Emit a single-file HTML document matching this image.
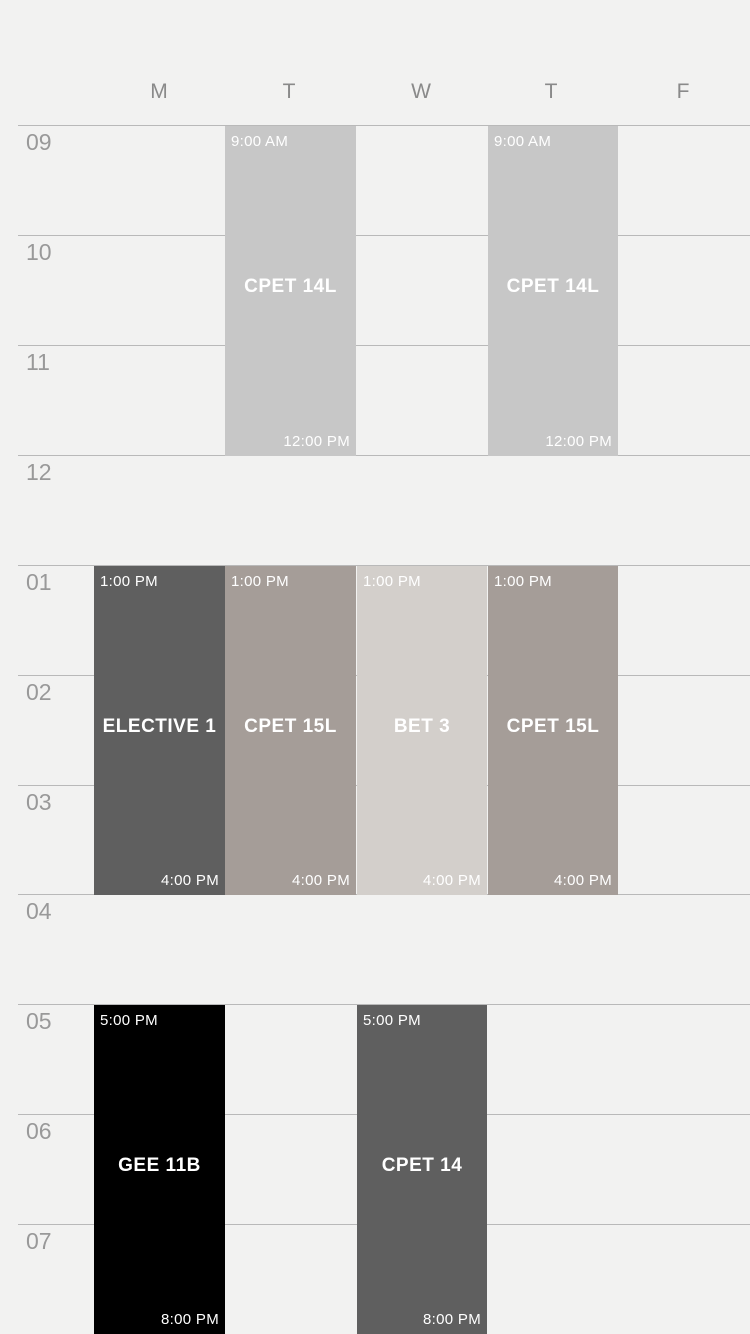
<!DOCTYPE html>
<html><head><style>
body{margin:0;width:750px;height:1334px;background:#f2f2f1;position:relative;overflow:hidden;font-family:"Liberation Sans",sans-serif}
.d{position:absolute;top:80px;font-size:21px;color:#8a8a8a;width:40px;text-align:center}
.l{position:absolute;left:18px;right:0;height:1px;background:#b9b9b9}
.h{position:absolute;left:26px;font-size:23px;color:#999}
.b{position:absolute;color:#fff}
.b .s{position:absolute;left:6px;top:7px;font-size:15px;letter-spacing:.3px}
.b .e{position:absolute;right:6px;bottom:6px;font-size:15px;letter-spacing:.3px}
.b .n{position:absolute;left:0;right:0;top:50%;margin-top:-15px;text-align:center;font-size:19px;font-weight:bold;letter-spacing:.5px}
</style></head><body>
<div class="d" style="left:139px">M</div>
<div class="d" style="left:269px">T</div>
<div class="d" style="left:401px">W</div>
<div class="d" style="left:531px">T</div>
<div class="d" style="left:663px">F</div>

<div class="l" style="top:125px"></div><div class="h" style="top:129px">09</div>
<div class="l" style="top:235px"></div><div class="h" style="top:239px">10</div>
<div class="l" style="top:345px"></div><div class="h" style="top:349px">11</div>
<div class="l" style="top:455px"></div><div class="h" style="top:459px">12</div>
<div class="l" style="top:565px"></div><div class="h" style="top:569px">01</div>
<div class="l" style="top:675px"></div><div class="h" style="top:679px">02</div>
<div class="l" style="top:785px"></div><div class="h" style="top:789px">03</div>
<div class="l" style="top:894px"></div><div class="h" style="top:898px">04</div>
<div class="l" style="top:1004px"></div><div class="h" style="top:1008px">05</div>
<div class="l" style="top:1114px"></div><div class="h" style="top:1118px">06</div>
<div class="l" style="top:1224px"></div><div class="h" style="top:1228px">07</div>

<div class="b" style="left:225px;top:126px;width:131px;height:330px;background:#c7c7c7"><div class="s">9:00 AM</div><div class="n">CPET 14L</div><div class="e">12:00 PM</div></div>
<div class="b" style="left:488px;top:126px;width:130px;height:330px;background:#c7c7c7"><div class="s">9:00 AM</div><div class="n">CPET 14L</div><div class="e">12:00 PM</div></div>

<div class="b" style="left:94px;top:566px;width:131px;height:329px;background:#5f5f5f"><div class="s">1:00 PM</div><div class="n">ELECTIVE 1</div><div class="e">4:00 PM</div></div>
<div class="b" style="left:225px;top:566px;width:131px;height:329px;background:#a59d98"><div class="s">1:00 PM</div><div class="n">CPET 15L</div><div class="e">4:00 PM</div></div>
<div class="b" style="left:357px;top:566px;width:130px;height:329px;background:#d3cfcb"><div class="s">1:00 PM</div><div class="n">BET 3</div><div class="e">4:00 PM</div></div>
<div class="b" style="left:488px;top:566px;width:130px;height:329px;background:#a59d98"><div class="s">1:00 PM</div><div class="n">CPET 15L</div><div class="e">4:00 PM</div></div>

<div class="b" style="left:94px;top:1005px;width:131px;height:329px;background:#000"><div class="s">5:00 PM</div><div class="n">GEE 11B</div><div class="e">8:00 PM</div></div>
<div class="b" style="left:357px;top:1005px;width:130px;height:329px;background:#5f5f5f"><div class="s">5:00 PM</div><div class="n">CPET 14</div><div class="e">8:00 PM</div></div>
</body></html>
